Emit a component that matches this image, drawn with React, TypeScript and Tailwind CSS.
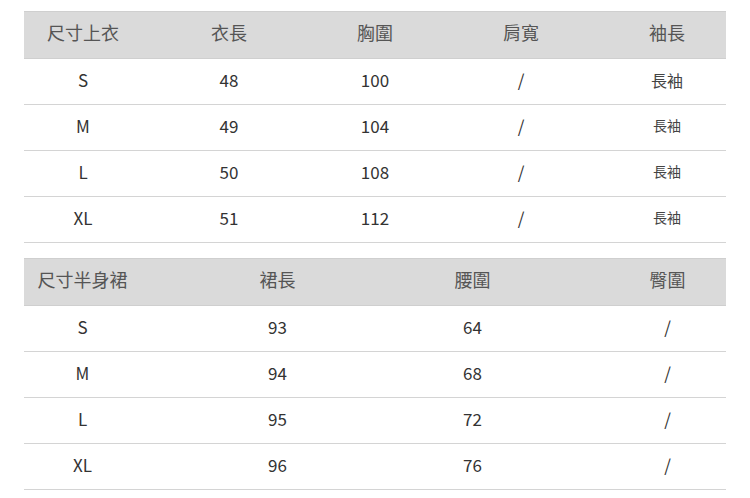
import React from "react";

const font = { fontFamily: '"Noto Sans CJK TC", "Noto Sans", sans-serif' };

const topHead = ["尺寸上衣", "衣長", "胸圍", "肩寬", "袖長"];
const topRows = [
  ["S", "48", "100", "/", "長袖"],
  ["M", "49", "104", "/", "長袖"],
  ["L", "50", "108", "/", "長袖"],
  ["XL", "51", "112", "/", "長袖"],
];

const skirtHead = ["尺寸半身裙", "裙長", "腰圍", "臀圍"];
const skirtRows = [
  ["S", "93", "64", "/"],
  ["M", "94", "68", "/"],
  ["L", "95", "72", "/"],
  ["XL", "96", "76", "/"],
];

function SizeTable({
  head,
  rows,
  cellW,
  shift,
}: {
  head: string[];
  rows: string[][];
  cellW: string;
  shift: string;
}) {
  return (
    <div>
      <div className="flex h-[48px] items-center border-y border-[#cfcfcf] bg-[#dadada] pb-[5px] text-[18px] text-[#555]">
        <div className={`${shift} flex shrink-0`}>
          {head.map((h, i) => (
            <div key={i} className={`${cellW} shrink-0 text-center`}>
              {h}
            </div>
          ))}
        </div>
      </div>
      {rows.map((r, ri) => (
        <div
          key={ri}
          className="flex h-[46px] items-center border-b border-[#d4d4d4] pb-[4px] text-[17px] text-[#333]"
        >
          <div className={`${shift} flex shrink-0 items-center`}>
            {r.map((c, ci) => (
              <div
                key={ci}
                className={`${cellW} shrink-0 text-center ${
                  c === "長袖" ? (ri === 0 ? "text-[16px] text-[#444]" : "text-[14px] text-[#444]") : ""
                }`}
              >
                {c}
              </div>
            ))}
          </div>
        </div>
      ))}
    </div>
  );
}

export default function App() {
  return (
    <div className="h-[498px] w-[750px] overflow-hidden bg-white px-[24px] pt-[11px]" style={font}>
      <SizeTable head={topHead} rows={topRows} cellW="w-[146px]" shift="-ml-[14px]" />
      <div className="mt-[15px]">
        <SizeTable head={skirtHead} rows={skirtRows} cellW="w-[195px]" shift="-ml-[39px]" />
      </div>
    </div>
  );
}
